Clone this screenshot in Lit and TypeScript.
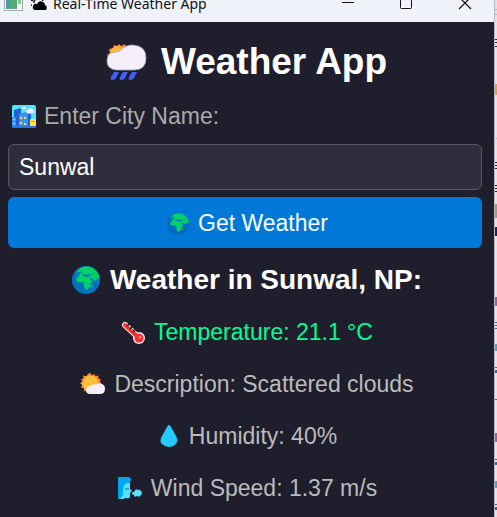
import { LitElement, html, svg, css } from "lit";
import { customElement, state } from "lit/decorators.js";

const globe = (ocean: string) => svg`
  <circle cx="14" cy="14" r="14" fill="${ocean}" />
  <path fill="#00d26a" d="M4 7 L7 3 L11 1 L17 0.5 L21 2 L25 6 L27 10 L27 13 L25 12 L24 15 L22 14 L20 12 L18 12 L19 15 L21 15 L18 18 L18 20 L15 24 L13 23 L12 20 L12 17 L10 16 L6 16 L4 14 L5 11 L8 10 L6 9 L9 7 L10 5 L7 6 Z" />
  <path fill="${ocean}" d="M10 9 L13 8 L14 9 L18 8 L19 10 L15 11 L11 10 Z M20 8 L22 7 L22 9 Z" />
  <path fill="#00d26a" d="M19 19 L21 18 L20 21 L18 22 Z" />`;

const sun = svg`
  <path fill="#ff822d" d="M13 0 L15 3 L18 1 L19 4 L23 3 L23 7 L26 8 L25 11 L27 13 L25 15 L26 18 L23 19 L23 23 L19 22 L17 25 L14 23 L11 25 L9 22 L5 23 L5 19 L1 18 L3 15 L0 13 L3 10 L1 8 L4 7 L4 3 L8 4 L10 1 Z" />
  <circle cx="13" cy="13" r="10" fill="#fcc13a" />`;

@customElement("app-root")
export class AppRoot extends LitElement {
  @state() private city = "Sunwal";

  static styles = css`
    :host {
      display: flex;
      min-height: 100vh;
      overflow: hidden;
      background: #e2e3e6;
      font-family: "Liberation Sans", Arial, sans-serif;
    }
    * { box-sizing: border-box; }
    svg { display: block; flex: none; overflow: visible; }
    .window {
      flex: 1;
      min-width: 0;
      background: #1f1e2d;
      border-right: 1px solid #b9babd;
    }
    .behind { flex: none; width: 2px; overflow: hidden; }
    .titlebar {
      display: flex;
      align-items: flex-end;
      height: 22px;
      overflow: hidden;
      padding: 0 13px 8px 4px;
      background: #eff3f9;
      color: #111;
      font: 14px/20px "Noto Sans", "Open Sans", sans-serif;
    }
    .app-icon { margin: 0 8px 3px 0; }
    .glyph { margin: 0 6px 3px 0; }
    .caption { flex: 1; white-space: nowrap; }
    .controls { display: flex; }
    .control {
      width: 58px;
      height: 20px;
      padding: 0;
      border: 0;
      background: none;
      display: flex;
      justify-content: center;
      align-items: center;
    }
    .control:last-child { width: 46px; justify-content: flex-end; padding-right: 10px; }
    .content {
      display: flex;
      flex-direction: column;
      padding: 14px 12px 0 8px;
      font-size: 23px;
      color: #bbb;
    }
    h1, h2, p { margin: 0; }
    .row {
      display: flex;
      align-items: center;
      justify-content: center;
      height: 52px;
      padding-left: 4px;
      gap: 8px;
      white-space: nowrap;
    }
    .title { gap: 14px; font-size: 37px; font-weight: bold; color: #fff; }
    .label { justify-content: flex-start; height: 56px; color: #aaa; }
    .city {
      width: 100%;
      height: 46px;
      padding: 0 10px;
      border: 1px solid #5a5a5f;
      border-radius: 6px;
      background: #2f2e3e;
      color: #fff;
      font: inherit;
      outline: none;
    }
    .submit {
      height: 51px;
      margin: 7px 0 6px;
      padding: 2px 0 0 4px;
      border: 0;
      border-radius: 6px;
      background: #0078d7;
      color: #fff;
      font: inherit;
    }
    .place { gap: 10px; font-size: 28px; font-weight: bold; color: #fff; }
    .temperature { color: #00ff90; }
  `;

  private onInput(e: Event) {
    this.city = (e.target as HTMLInputElement).value;
  }

  render() {
    return html`
      <div class="window">
        <header class="titlebar">
          <svg class="app-icon" width="19" height="18" viewBox="0 0 19 18" aria-hidden="true">
            <rect x="0.5" y="0.5" width="18" height="17" fill="#fff" stroke="#a5a8aa" />
            <rect x="2" y="2" width="11" height="14" fill="#4f9bad" />
            <path d="M7 2 H13 V16 H4 Z" fill="#55aa78" />
            <rect x="14" y="2" width="3" height="9" fill="#7fd494" />
          </svg>
          <svg class="glyph" width="16" height="18" viewBox="0 0 16 18" aria-hidden="true">
            <path d="M4 17 Q1 16 2 13 Q3 10 6 11 Q8 7 12 9 Q14 10 14 12 Q17 14 15 17 Z" fill="#000" />
            <path d="M3 10 Q3 5 8 5 Q11 5 12 8 M0 7 L2 8 M1 12 H0 M3 3 L4 5 M8 1 V3 M13 3 L12 5" fill="none" stroke="#000" stroke-width="1.3" />
          </svg>
          <span class="caption">Real-Time Weather App</span>
          <div class="controls">
            <button class="control" aria-label="Minimize">
              <svg width="12" height="12" viewBox="0 0 12 12"><path d="M0 4.5 H12" stroke="#111" /></svg>
            </button>
            <button class="control" aria-label="Maximize">
              <svg width="12" height="12" viewBox="0 0 12 12"><rect x="0.5" y="-0.5" width="11" height="11" rx="1" fill="none" stroke="#111" /></svg>
            </button>
            <button class="control" aria-label="Close">
              <svg width="12" height="12" viewBox="0 0 12 12"><path d="M0 -1 L12 11 M12 -1 L0 11" stroke="#111" stroke-width="1.2" /></svg>
            </button>
          </div>
        </header>

        <main class="content">
          <h1 class="row title">
            <svg width="40" height="36" viewBox="0 0 40 36" aria-hidden="true">
              <path fill="#ff822d" d="M2 14 L0 11 L3 9 L2 5 L6 4 L7 1 L10 2 L12 0 L14 2 L18 0 L19 4 L22 6 L12 18 Z" />
              <circle cx="11" cy="10" r="8" fill="#fcb53a" />
              <path fill="#f3eef8" stroke="#aaa4b5" stroke-width="0.8" d="M9 26 Q0 25 0 17 Q0 8 9 8 Q12 8 14 6 Q18 1 26 1 Q39 2 39 14 Q39 26 27 26 Z" />
              <path fill="#3f5fff" d="M7 28 H12 L9 34 Q8 36 5 36 Q3 36 4 33 Z M16 28 H21 L18 34 Q17 36 14 36 Q12 36 13 33 Z M25 28 H30 L27 34 Q26 36 23 36 Q21 36 22 33 Z" />
            </svg>
            Weather App
          </h1>

          <label class="row label" for="city">
            <svg width="24" height="23" viewBox="0 0 24 23" aria-hidden="true">
              <rect width="24" height="23" rx="2" fill="#50e2ff" />
              <path fill="#f3eef8" d="M10 4 Q9 2 12 2 Q14 1 14 3 Q15 4 13 4 Z M14 7 Q13 5 16 5 Q17 2 20 4 Q23 5 22 8 H16 Z" />
              <path fill="#1b62d6" d="M2 5 L9 3 V22 H2 Z M15 9 H19 V22 H15 Z" />
              <path fill="#3f8fee" d="M0 12 H4 V22 H0 Z M7 9 L13 7 L16 9 V22 H7 Z" />
              <path fill="#ffe04a" d="M18 14 H24 V21 H18 Z M8 12 H10 V14 H8 Z M12 12 H14 V14 H12 Z M8 17 H10 V19 H8 Z M12 18 H14 V20 H12 Z M1 14 H3 V15 H1 Z M1 18 H3 V19 H1 Z" />
              <path fill="#e8ac25" d="M19 16 H23 V17 H19 Z" />
              <path fill="#2575dd" d="M0 21 H24 Q24 23 22 23 H2 Q0 23 0 21 Z" />
            </svg>
            Enter City Name:
          </label>
          <input class="city" id="city" type="text" .value=${this.city} @input=${this.onInput} />

          <button class="submit row">
            <svg width="24" height="24" viewBox="-1 -1 30 30" aria-hidden="true">${globe("#006bbd")}</svg>
            Get Weather
          </button>

          <h2 class="row place">
            <svg width="28" height="28" viewBox="0 0 28 28" aria-hidden="true">${globe("#0074ba")}</svg>
            Weather in Sunwal, NP:
          </h2>
          <p class="row temperature">
            <svg width="25" height="23" viewBox="0 0 25 23" aria-hidden="true">
              <path d="M4 4 L18 17" stroke="#eee8f2" stroke-width="6" stroke-linecap="round" />
              <circle cx="18" cy="17" r="6" fill="#eee8f2" />
              <path d="M4 4 L18 17" stroke="#f8312f" stroke-width="4" stroke-linecap="round" />
              <circle cx="18" cy="17" r="4.5" fill="#f8312f" />
              <circle cx="19" cy="16" r="1.5" fill="#ff8687" />
              <path d="M8 3 L6 5 M11 6 L9 8 M14 9 L12 11" stroke="#17151f" stroke-width="1.5" />
            </svg>
            Temperature: 21.1 °C
          </p>
          <p class="row">
            <svg width="26" height="22" viewBox="0 0 26 22" aria-hidden="true">
              <g transform="scale(0.8)">${sun}</g>
              <path fill="#f3eef8" d="M10 21 Q6 21 6 17 Q6 13 11 13 Q13 10 16 12 Q18 9 22 11 Q25 12 25 16 Q25 21 20 21 Z" />
            </svg>
            Description: Scattered clouds
          </p>
          <p class="row">
            <svg width="24" height="24" viewBox="0 0 24 24" aria-hidden="true">
              <path fill="#26c9fc" d="M12 1 Q13 1 14 3 L19 12 Q22 17 18 21 Q15 23 12 23 Q8 23 5 20 Q2 17 5 12 L10 3 Q11 1 12 1 Z" />
            </svg>
            Humidity: 40%
          </p>
          <p class="row">
            <svg width="26" height="23" viewBox="0 0 26 23" aria-hidden="true">
              <path fill="#00a6ed" d="M1 0 H11 Q14 0 14 3 L12 8 L8 10 L7 19 L4 22 H1 Z" />
              <path fill="#50e2ff" d="M13 6 V12 L15 14 L13 16 V20 Q12 22 9 21 L6 22 H3 Q6 20 6 14 Q6 7 10 6 Z" />
              <path d="M8 12 H12" stroke="#16719f" stroke-width="1" />
              <path fill="#50e2ff" d="M15 16 L18 14 Q18 11 21 13 Q22 12 24 14 Q26 16 24 18 Q22 21 20 19 Q17 21 17 18 L15 17 Z" />
            </svg>
            Wind Speed: 1.37 m/s
          </p>
        </main>
      </div>
      <div class="behind" aria-hidden="true">
        <svg width="2" height="517" viewBox="0 0 2 517">
          <path fill="#b8b9bc" d="M0 9h2v1H0z M0 14h2v1H0z M0 138h2v1H0z" />
          <path fill="#222" d="M0 39h2v1H0z M0 42h2v1H0z M0 46h2v1H0z M0 162h2v1H0z M0 165h2v1H0z M0 168h2v1H0z M0 185h2v1H0z M0 188h2v1H0z M0 191h2v1H0z" />
          <path fill="#dda334" d="M0 84h2v11H0z" />
          <path fill="#9d968c" d="M0 204h2v14H0z" />
          <path fill="#17206c" d="M0 227h2v9H0z" />
          <path fill="#9164a4" d="M0 297h2v9H0z M0 433h2v9H0z" />
          <path fill="#286a9d" d="M0 322h2v1H0z M0 325h2v1H0z M0 328h2v1H0z M0 367h2v1H0z M0 370h2v3H0z M0 399h2v1H0z M0 459h2v1H0z M0 462h2v3H0z M0 504h2v1H0z M0 507h2v3H0z" />
          <path fill="#4d9fc4" d="M0 344h2v7H0z M0 481h2v7H0z" />
        </svg>
      </div>
    `;
  }
}
